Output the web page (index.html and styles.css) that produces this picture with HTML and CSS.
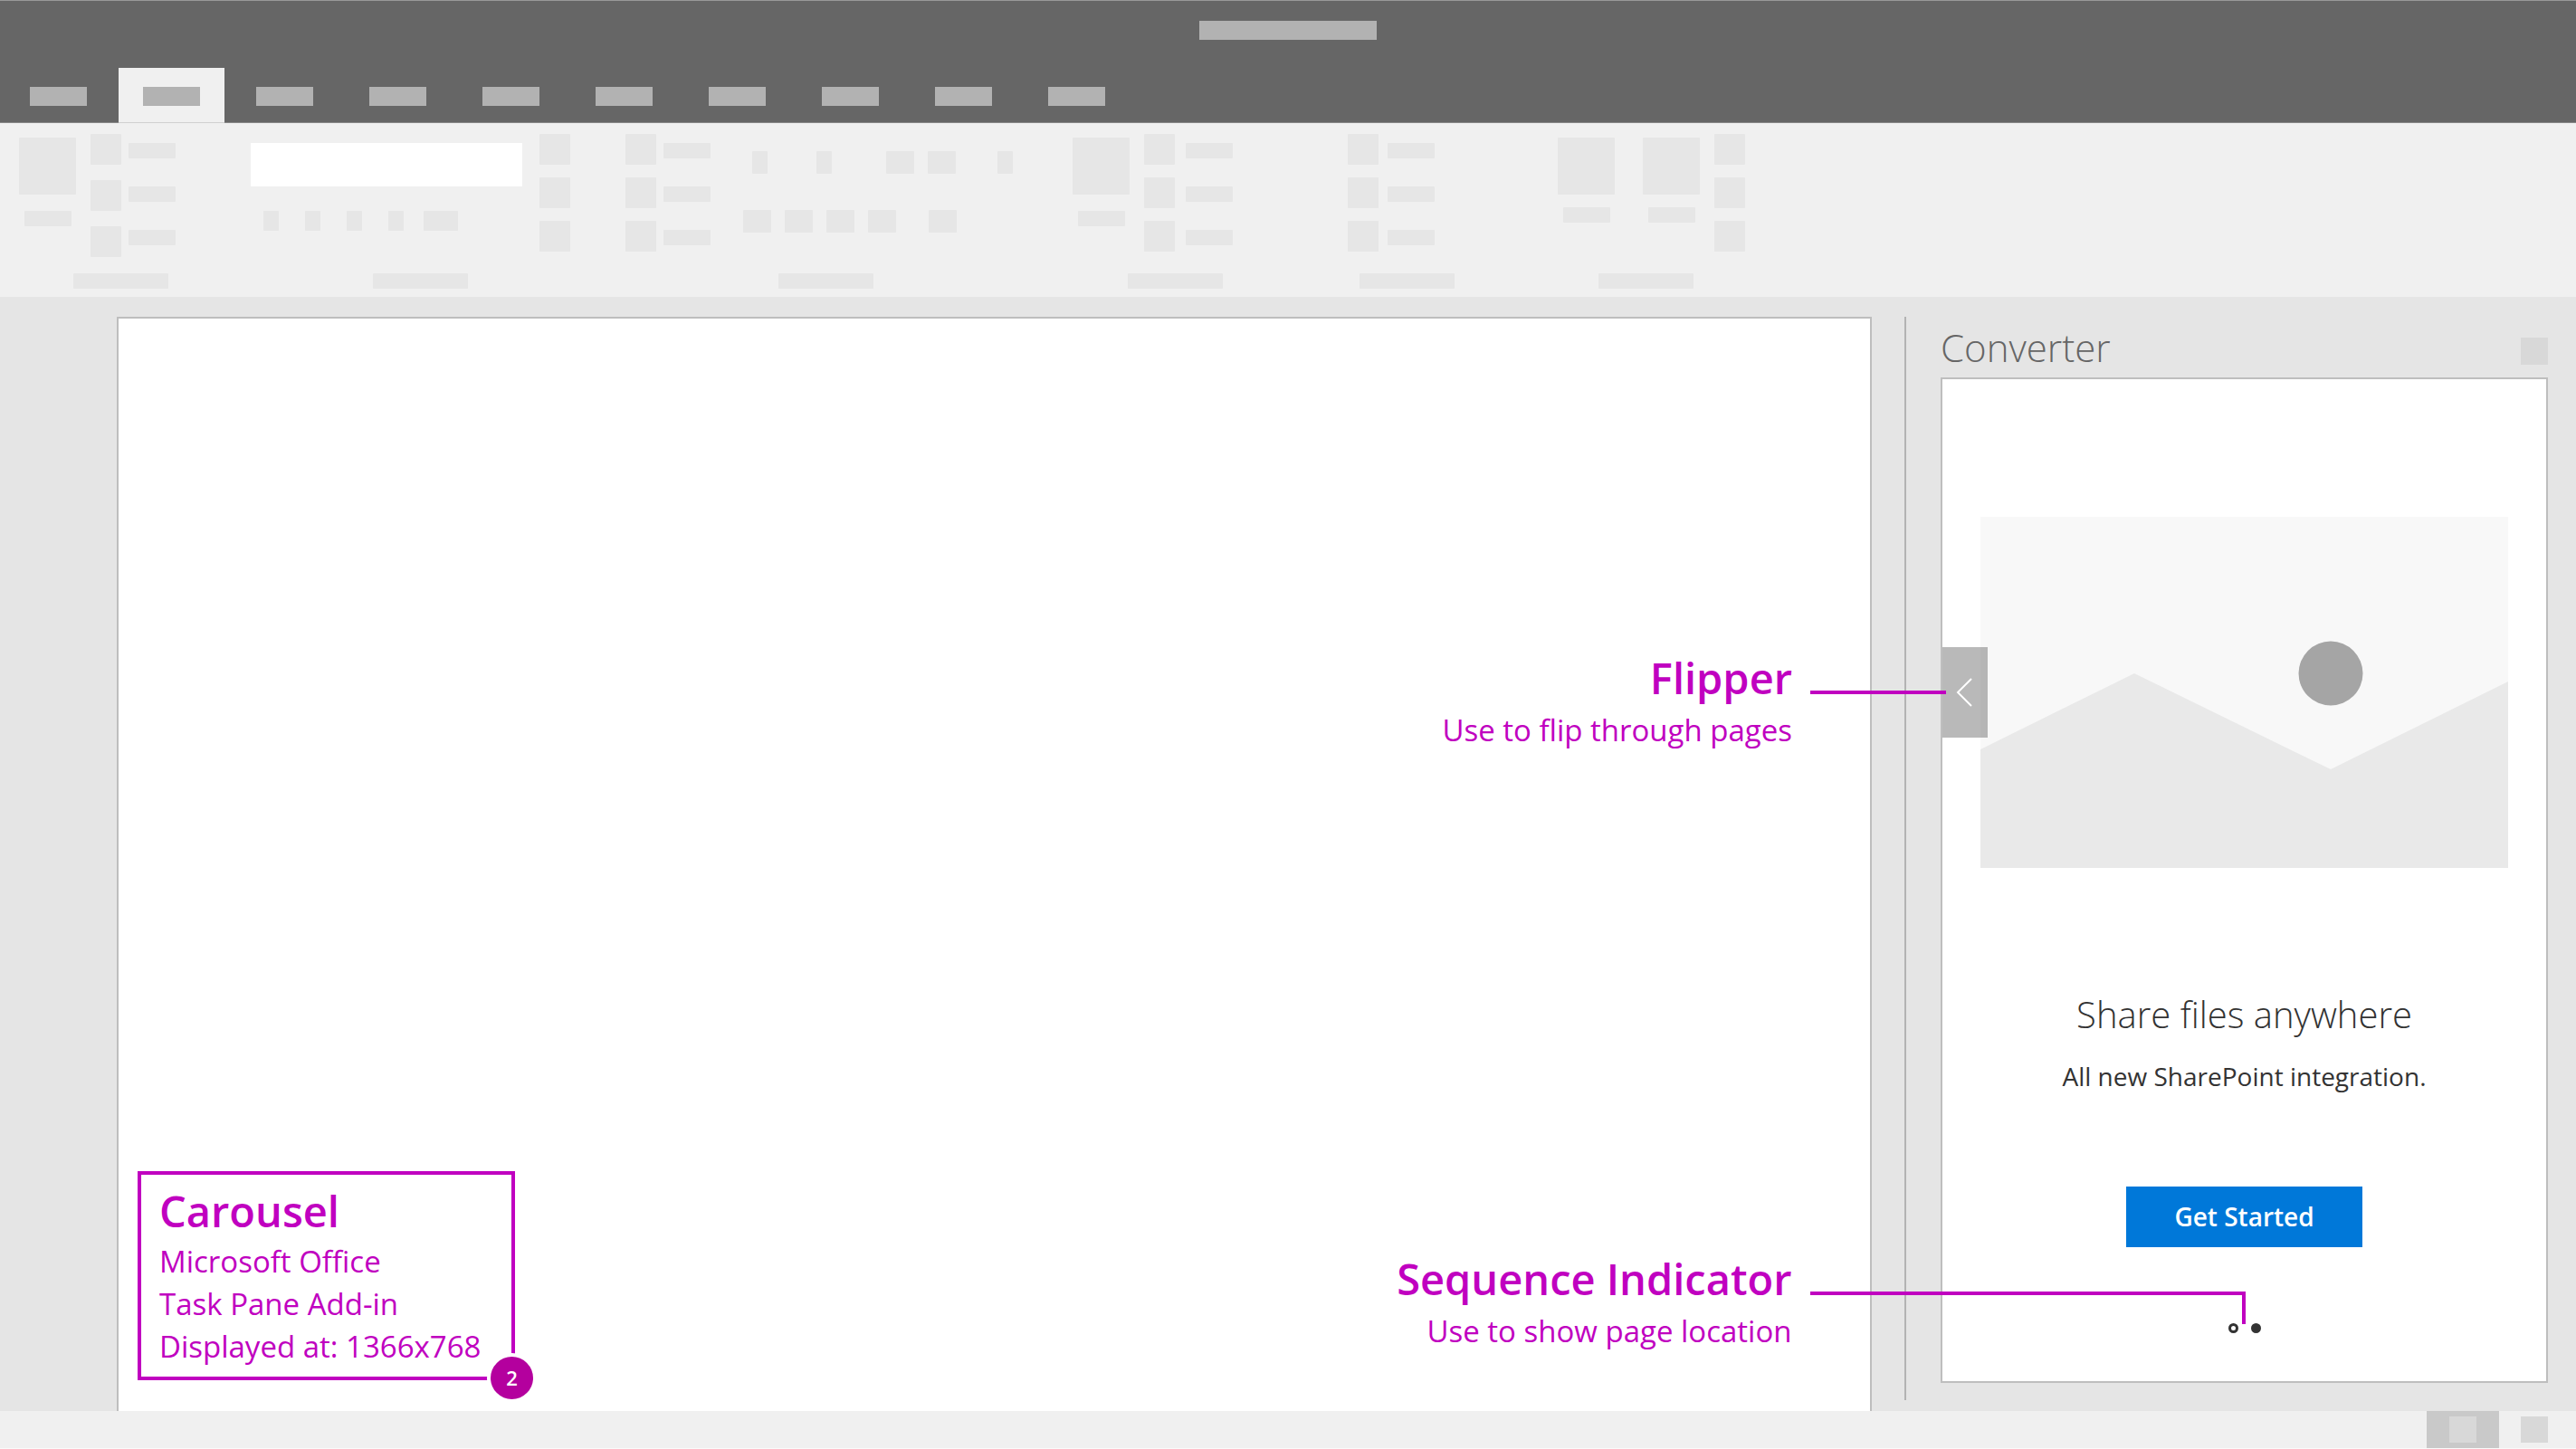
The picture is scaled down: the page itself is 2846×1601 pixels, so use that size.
FILE: index.html
```html
<!DOCTYPE html>
<html lang="en">
<head>
  <meta charset="utf-8">
  <title>Carousel</title>
  <meta name="viewport" content="width=device-width, initial-scale=1">
  <link rel="stylesheet" href="styles.css">
</head>
<body class="app">
  <header class="titlebar">
    <div class="titlebar-name"></div>
    <nav class="tabs" aria-label="Ribbon tabs">
      <button class="tab" type="button" aria-label="Tab 1"></button>
      <button class="tab tab-active" type="button" aria-label="Tab 2"></button>
      <button class="tab" type="button" aria-label="Tab 3"></button>
      <button class="tab" type="button" aria-label="Tab 4"></button>
      <button class="tab" type="button" aria-label="Tab 5"></button>
      <button class="tab" type="button" aria-label="Tab 6"></button>
      <button class="tab" type="button" aria-label="Tab 7"></button>
      <button class="tab" type="button" aria-label="Tab 8"></button>
      <button class="tab" type="button" aria-label="Tab 9"></button>
      <button class="tab" type="button" aria-label="Tab 10"></button>
    </nav>
  </header>

  <section class="ribbon" aria-label="Ribbon">
    <div class="group group-1">
      <div class="group-body">
        <div class="large"><i class="large-icon"></i><i class="label"></i></div>
        <div class="icons"><i></i><i></i><i></i></div>
        <div class="labels"><i class="label"></i><i class="label"></i><i class="label"></i></div>
      </div>
      <i class="caption"></i>
    </div>
    <div class="group group-2">
      <div class="group-body">
        <div class="font-box">
          <input class="font-input" type="text" aria-label="Font">
          <div class="font-tools"><i class="narrow"></i><i class="narrow"></i><i class="narrow"></i><i class="narrow"></i><i></i></div>
        </div>
        <div class="icons"><i></i><i></i><i></i></div>
      </div>
      <i class="caption"></i>
    </div>
    <div class="group group-3">
      <div class="group-body">
        <div class="icons"><i></i><i></i><i></i></div>
        <div class="labels"><i class="label"></i><i class="label"></i><i class="label"></i></div>
        <div class="cluster">
          <div class="cluster-top"><i class="narrow"></i><i class="narrow"></i><i></i><i></i><i class="narrow"></i></div>
          <div class="cluster-bottom"><i></i><i></i><i></i><i></i><i></i></div>
        </div>
      </div>
      <i class="caption"></i>
    </div>
    <div class="group group-4">
      <div class="group-body">
        <div class="large"><i class="large-icon"></i><i class="label"></i></div>
        <div class="icons"><i></i><i></i><i></i></div>
        <div class="labels"><i class="label"></i><i class="label"></i><i class="label"></i></div>
      </div>
      <i class="caption"></i>
    </div>
    <div class="group group-5">
      <div class="group-body">
        <div class="icons"><i></i><i></i><i></i></div>
        <div class="labels"><i class="label"></i><i class="label"></i><i class="label"></i></div>
      </div>
      <i class="caption"></i>
    </div>
    <div class="group group-6">
      <div class="group-body">
        <div class="large"><i class="large-icon"></i><i class="label"></i></div>
        <div class="large"><i class="large-icon"></i><i class="label"></i></div>
        <div class="icons"><i></i><i></i><i></i></div>
      </div>
      <i class="caption"></i>
    </div>
  </section>

  <main class="workspace">
    <section class="document">
      <aside class="note">
        <h1 class="callout-title">Carousel</h1>
        <p class="callout-text">Microsoft Office<br>Task Pane Add-in<br>Displayed at: 1366x768</p>
        <span class="note-badge">2</span>
      </aside>
    </section>

    <div class="divider"></div>

    <aside class="pane">
      <div class="pane-head">
        <h2 class="pane-title">Converter</h2>
        <button class="pane-close" type="button" aria-label="Close"></button>
      </div>
      <div class="card">
        <svg class="picture" viewBox="0 0 583 388" preserveAspectRatio="none" aria-hidden="true">
          <rect width="583" height="388" fill="#f8f8f8"/>
          <path d="M0 257 170 173 387 279 583 182V388H0Z" fill="#e9e9e9"/>
          <circle cx="387" cy="173" r="35.5" fill="#a5a5a5"/>
        </svg>
        <h3 class="slide-title">Share files anywhere</h3>
        <p class="slide-text">All new SharePoint integration.</p>
        <button class="primary" type="button">Get Started</button>
        <div class="dots">
          <button class="dot" type="button" aria-label="Page 1"></button>
          <button class="dot dot-current" type="button" aria-label="Page 2"></button>
        </div>

        <button class="flipper" type="button" aria-label="Previous page">
          <svg width="20" height="34" viewBox="0 0 20 34" fill="none" stroke="#fff" stroke-width="2" aria-hidden="true"><path d="M17 2 2 17 17 32"/></svg>
        </button>

        <div class="callout callout-flipper">
          <div>
            <h4 class="callout-title">Flipper</h4>
            <p class="callout-text">Use to flip through pages</p>
          </div>
          <span class="connector"></span>
        </div>
        <div class="callout callout-sequence">
          <div>
            <h4 class="callout-title">Sequence Indicator</h4>
            <p class="callout-text">Use to show page location</p>
          </div>
          <span class="connector connector-elbow"></span>
        </div>
      </div>
    </aside>
  </main>

  <footer class="status">
    <button class="view view-active" type="button" aria-label="View 1"></button>
    <button class="view" type="button" aria-label="View 2"></button>
  </footer>
</body>
</html>
```

FILE: styles.css
```css
:root {
  --accent: #c000c0;
  --block: #e6e6e6;
  --edge: #bebebe;
}

* { box-sizing: border-box; }

h1, h2, h3, h4, p { margin: 0; }

button, input {
  margin: 0;
  padding: 0;
  border: 0;
  font: inherit;
}

.app {
  display: flex;
  flex-direction: column;
  min-height: 100vh;
  margin: 0;
  background: #e5e5e5;
  color: #333;
  font-family: "Open Sans", "Noto Sans", sans-serif;
}

/* Title bar and tabs */

.titlebar {
  display: flex;
  flex-direction: column;
  align-items: center;
  justify-content: space-between;
  height: 136px;
  padding-top: 22px;
  border-top: 1px solid #999;
  border-bottom: 1px solid #888;
  background: #666;
}

.titlebar-name {
  width: 196px;
  height: 21px;
  background: #b2b2b2;
}

.tabs {
  display: flex;
  align-self: stretch;
  gap: 8px;
  padding-left: 6px;
}

.tab {
  width: 117px;
  height: 60px;
  padding: 2px 27px 0;
  background: transparent;
}

.tab::before {
  content: "";
  display: block;
  height: 21px;
  background: #b2b2b2;
}

.tab-active {
  background: #f0f0f0;
  box-shadow: 0 1px #d0d0d0;
}

/* Ribbon */

.ribbon {
  display: flex;
  height: 192px;
  padding-top: 12px;
  background: #f0f0f0;
}

.ribbon i {
  display: block;
  border-radius: 1px;
  background: var(--block);
}

.group {
  display: flex;
  flex-direction: column;
  align-items: center;
}

.group-1 { width: 266px; }
.group-2 { width: 397px; }
.group-3 { width: 499px; }
.group-4 { width: 272px; }
.group-5 { width: 240px; }
.group-6 { width: 289px; }

.group-body {
  display: flex;
  align-self: stretch;
  align-items: flex-start;
  height: 154px;
}

.group-1 .group-body { padding-left: 21px; }
.group-2 .group-body { padding-left: 11px; }
.group-3 .group-body { padding-left: 28px; }
.group-4 .group-body { padding-left: 23px; }
.group-5 .group-body { padding-left: 55px; }
.group-6 .group-body { padding-left: 47px; }

.caption {
  width: 105px;
  height: 17px;
}

.large {
  display: flex;
  flex-direction: column;
  align-items: center;
  gap: 18px;
  margin: 4px 16px 0 0;
}

.group-6 .large { gap: 14px; }
.group-6 .large:first-child { margin-right: 31px; }

.large-icon {
  width: 63px;
  height: 63px;
}

.label {
  width: 52px;
  height: 17px;
}

.icons {
  display: grid;
  gap: 14px;
}

.group-1 .icons { gap: 17px; }

.icons i {
  width: 34px;
  height: 34px;
}

.labels {
  display: grid;
  gap: 31px;
  margin: 10px 0 0 8px;
}

.group-4 .labels { margin-left: 12px; }
.group-5 .labels { margin-left: 10px; }

.font-box {
  width: 300px;
  margin: 10px 19px 0 0;
}

.font-input {
  display: block;
  width: 100%;
  height: 48px;
  background: #fff;
}

.font-tools {
  display: grid;
  grid-template-columns: 46px 46px 46px 39px 38px;
  margin: 27px 0 0 14px;
}

.font-tools i { height: 22px; }

.cluster { margin: 19px 0 0 36px; }

.cluster-top {
  display: grid;
  grid-template-columns: 71px 77px 46px 77px 17px;
  padding-left: 10px;
}

.cluster-bottom {
  display: grid;
  grid-template-columns: 46px 46px 46px 67px 31px;
  margin-top: 40px;
}

.cluster i {
  width: 31px;
  height: 25px;
}

.ribbon .narrow { width: 17px; }

/* Workspace */

.workspace {
  display: flex;
  flex: 1;
  padding: 22px 31px 0 129px;
}

.document {
  position: relative;
  flex: 1;
  border: 2px solid var(--edge);
  border-bottom: 0;
  background: #fff;
}

.divider {
  width: 2px;
  margin: 0 38px 12px 36px;
  background: #b3b3b3;
}

.pane {
  display: flex;
  flex-direction: column;
  width: 671px;
  padding-bottom: 31px;
}

.pane-head {
  display: flex;
  align-items: flex-end;
  justify-content: space-between;
}

.pane-title {
  color: #666;
  font-size: 42px;
  font-weight: 300;
  line-height: 67px;
}

.pane-close {
  width: 30px;
  height: 30px;
  margin-bottom: 14px;
  background: #d8d8d8;
}

.card {
  position: relative;
  display: flex;
  flex: 1;
  flex-direction: column;
  align-items: center;
  padding: 152px 42px 50px;
  border: 2px solid var(--edge);
  background: #fff;
}

.picture {
  display: block;
  width: 100%;
  height: 388px;
}

.slide-title {
  margin-top: 134px;
  font-size: 40px;
  font-weight: 300;
  line-height: 56px;
}

.slide-text {
  margin-top: 20px;
  font-size: 28px;
  line-height: 40px;
}

.primary {
  width: 261px;
  height: 67px;
  margin-top: 102px;
  padding-bottom: 2px;
  background: #0078d9;
  color: #fff;
  font-size: 28px;
  font-weight: 600;
  line-height: 40px;
}

.dots {
  display: flex;
  gap: 14px;
  margin-top: 84px;
}

.dot {
  width: 11px;
  height: 11px;
  border: 3px solid #333;
  border-radius: 50%;
  background: #fff;
}

.dot-current { background: #333; }

.flipper {
  position: absolute;
  top: 296px;
  left: 0;
  display: grid;
  place-items: center;
  width: 50px;
  height: 100px;
  background: rgba(102, 102, 102, 0.46);
}

/* Annotations */

.callout-title {
  font-size: 47px;
  font-weight: 600;
  line-height: 64px;
}

.callout-text {
  font-size: 33px;
  line-height: 47px;
}

.note {
  position: absolute;
  bottom: 34px;
  left: 21px;
  width: 417px;
  padding: 8px 20px 10px;
  border: 4px solid var(--accent);
  color: var(--accent);
}

.note-badge {
  position: absolute;
  right: -24px;
  bottom: -25px;
  width: 47px;
  height: 47px;
  border-radius: 50%;
  background: #b4009e;
  box-shadow: 0 0 0 4px #fff;
  color: #fff;
  font-size: 22px;
  font-weight: 600;
  line-height: 47px;
  text-align: center;
}

.callout {
  position: absolute;
  display: flex;
  align-items: flex-start;
  gap: 20px;
  color: var(--accent);
  text-align: right;
  white-space: nowrap;
}

.callout .callout-text { margin-top: 2px; }

.callout-flipper {
  top: 298px;
  right: calc(100% - 4px);
}

.callout-sequence {
  top: 962px;
  right: calc(50% - 1px);
}

.connector {
  width: 150px;
  height: 4px;
  margin-top: 46px;
  background: var(--accent);
}

.connector-elbow {
  width: 481px;
  height: 36px;
  border: solid var(--accent);
  border-width: 4px 4px 0 0;
  background: none;
}

/* Status bar */

.status {
  display: flex;
  align-items: center;
  justify-content: flex-end;
  height: 42px;
  padding-right: 31px;
  border-bottom: 1px solid #fafafa;
  background: #f0f0f0;
}

.view {
  display: grid;
  place-items: center;
  height: 41px;
  background: none;
}

.view::before {
  content: "";
  width: 30px;
  height: 29px;
  background: #d8d8d8;
}

.view-active {
  width: 80px;
  margin-right: 24px;
  background: #c9c9c9;
}
```
